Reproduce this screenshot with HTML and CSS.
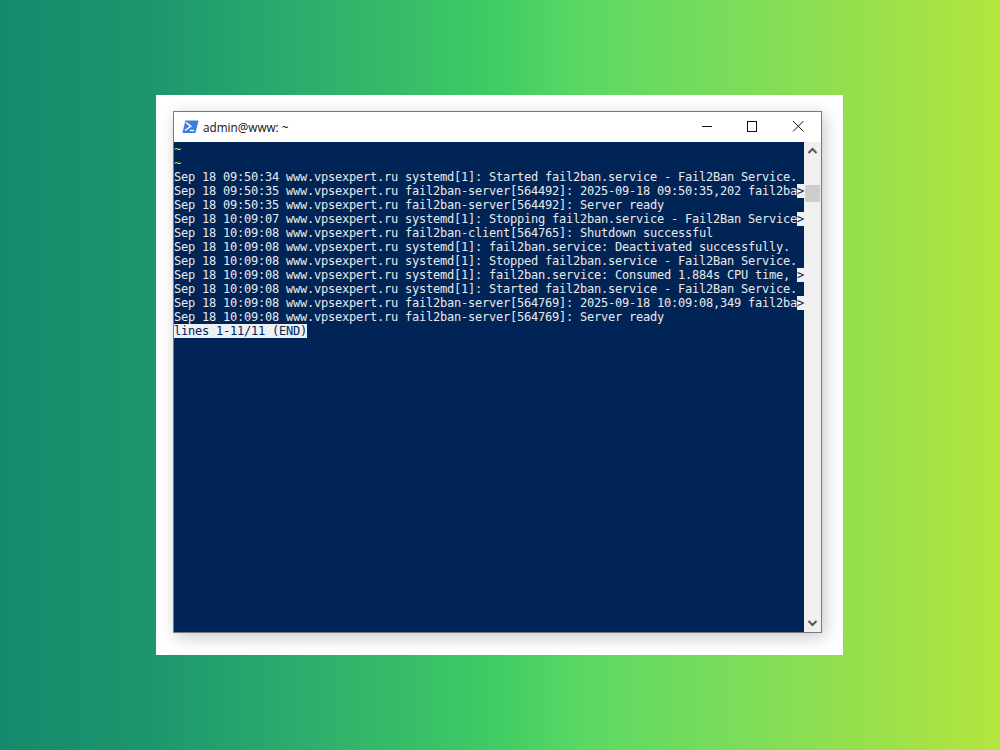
FILE: index.html
```html
<!DOCTYPE html>
<html lang="en">
<head>
<meta charset="utf-8">
<title>admin@www: ~</title>
<link rel="stylesheet" href="styles.css">
</head>
<body>
<div class="card">
  <div class="window">
    <div class="titlebar">
      <svg class="ps-icon" width="17" height="14" viewBox="0 0 17 14">
        <path d="M3.4 0.5H16.6L13.4 13H0.400Z" fill="#3f7ede"/>
        <path d="M4 2.500L8.800 6.300L3 10.500" fill="none" stroke="#fff" stroke-width="1.500"/>
        <path d="M8 10.500H12" fill="none" stroke="#fff" stroke-width="1.300"/>
      </svg>
      <span class="title">admin@www: ~</span>
      <div class="controls">
        <svg width="46" height="30" viewBox="0 0 46 30"><path d="M19 14.500H29" stroke="#111" fill="none"/></svg>
        <svg width="46" height="30" viewBox="0 0 46 30"><rect x="18.500" y="9.500" width="9" height="10" stroke="#111" fill="none"/></svg>
        <svg width="46" height="30" viewBox="0 0 46 30"><path d="M18 9L28.500 19.500M28.500 9L18 19.500" stroke="#111" fill="none"/></svg>
      </div>
    </div>
    <div class="body">
      <div class="term">
        <div class="line tilde">~</div>
        <div class="line tilde">~</div>
        <div class="line">Sep 18 09:50:34 www.vpsexpert.ru systemd[1]: Started fail2ban.service - Fail2Ban Service.</div>
        <div class="line">Sep 18 09:50:35 www.vpsexpert.ru fail2ban-server[564492]: 2025-09-18 09:50:35,202 fail2ba<span class="inv">&gt;</span></div>
        <div class="line">Sep 18 09:50:35 www.vpsexpert.ru fail2ban-server[564492]: Server ready</div>
        <div class="line">Sep 18 10:09:07 www.vpsexpert.ru systemd[1]: Stopping fail2ban.service - Fail2Ban Service<span class="inv">&gt;</span></div>
        <div class="line">Sep 18 10:09:08 www.vpsexpert.ru fail2ban-client[564765]: Shutdown successful</div>
        <div class="line">Sep 18 10:09:08 www.vpsexpert.ru systemd[1]: fail2ban.service: Deactivated successfully.</div>
        <div class="line">Sep 18 10:09:08 www.vpsexpert.ru systemd[1]: Stopped fail2ban.service - Fail2Ban Service.</div>
        <div class="line">Sep 18 10:09:08 www.vpsexpert.ru systemd[1]: fail2ban.service: Consumed 1.884s CPU time, <span class="inv">&gt;</span></div>
        <div class="line">Sep 18 10:09:08 www.vpsexpert.ru systemd[1]: Started fail2ban.service - Fail2Ban Service.</div>
        <div class="line">Sep 18 10:09:08 www.vpsexpert.ru fail2ban-server[564769]: 2025-09-18 10:09:08,349 fail2ba<span class="inv">&gt;</span></div>
        <div class="line">Sep 18 10:09:08 www.vpsexpert.ru fail2ban-server[564769]: Server ready</div>
        <div class="line"><span class="inv">lines 1-11/11 (END)</span></div>
      </div>
      <div class="scrollbar">
        <svg class="arrow" width="17" height="17" viewBox="0 0 17 17"><path d="M4.500 11L8.500 7L12.500 11" fill="none" stroke="#555" stroke-width="2"/></svg>
        <div class="track"><div class="thumb"></div></div>
        <svg class="arrow" width="17" height="17" viewBox="0 0 17 17"><path d="M4.500 6L8.500 10L12.500 6" fill="none" stroke="#555" stroke-width="2"/></svg>
      </div>
    </div>
  </div>
</div>
</body>
</html>
```
FILE: styles.css
```css
html, body {
  margin: 0;
  height: 100%;
}
body {
  width: 1000px;
  height: 750px;
  overflow: hidden;
  background: linear-gradient(90deg, #148a6c 0%, #1c966e 15%, #2eb06c 32%, #41cc64 50%, #5ad864 58%, #78dc5c 72%, #98e04c 87%, #b4e63e 100%);
  padding: 95px 157px 95px 156px;
  box-sizing: border-box;
}
.card {
  width: 687px;
  height: 560px;
  background: #fff;
  padding: 16px 21px 22px 17px;
  box-sizing: border-box;
}
.window {
  width: 649px;
  height: 522px;
  border: 1px solid #7a7a7a;
  box-sizing: border-box;
  background: #fff;
  box-shadow: 3px 4px 16px rgba(0, 0, 0, 0.22);
  display: flex;
  flex-direction: column;
}
.titlebar {
  height: 30px;
  flex: none;
  display: flex;
  align-items: center;
  padding-left: 8px;
  background: #fff;
}
.ps-icon {
  flex: none;
  margin-top: -1px;
}
.title {
  margin-left: 4px;
  font: 11.75px/30px "Open Sans", "Noto Sans", sans-serif;
  color: #111;
}
.controls {
  margin-left: auto;
  display: flex;
}
.controls svg {
  display: block;
}
.body {
  flex: 1;
  display: flex;
  min-height: 0;
}
.term {
  width: 630px;
  flex: none;
  background: #012456;
  color: #eaeaea;
  font: 12px/14px "DejaVu Sans Mono", "Liberation Mono", monospace;
  overflow: hidden;
}
.line {
  height: 14px;
  white-space: pre;
  letter-spacing: -0.224px;
}
.tilde {
  color: #b5f02d;
}
.inv {
  background: #eef0f4;
  color: #012456;
}
.scrollbar {
  width: 17px;
  flex: none;
  background: #f0f0f0;
  display: flex;
  flex-direction: column;
}
.arrow {
  flex: none;
  display: block;
}
.track {
  flex: 1;
}
.thumb {
  height: 17px;
  margin: 26px 1px 0;
  background: #cdcdcd;
}
```
